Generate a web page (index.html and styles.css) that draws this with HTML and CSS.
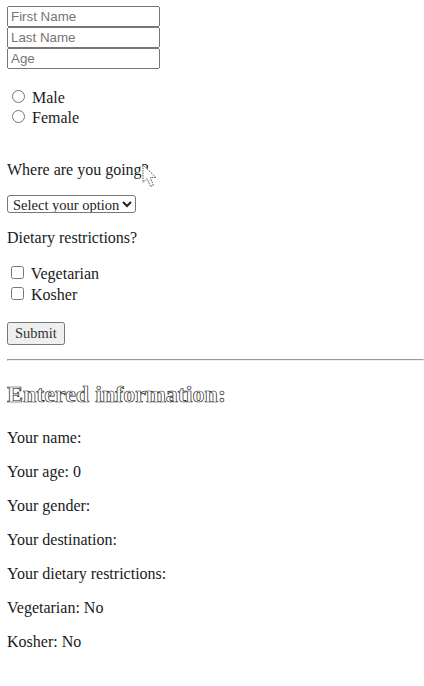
FILE: index.html
```html
<!DOCTYPE html>
<html>
<head>
<meta charset="utf-8">
<link rel="stylesheet" href="styles.css">
</head>
<body>
<form class="form">
  <input class="field" type="text" placeholder="First Name">
  <input class="field" type="text" placeholder="Last Name">
  <input class="field" type="text" placeholder="Age">
  <div class="group group-radio">
    <label class="opt"><input type="radio" name="gender"> Male</label>
    <label class="opt"><input type="radio" name="gender"> Female</label>
  </div>
  <p class="question question-first">Where are you going?</p>
  <select class="select"><option>Select your option</option></select>
  <p class="question question-diet">Dietary restrictions?</p>
  <div class="group group-check">
    <label class="opt opt-check"><input type="checkbox"> Vegetarian</label>
    <label class="opt opt-check"><input type="checkbox"> Kosher</label>
  </div>
  <button class="submit" type="button">Submit</button>
</form>
<hr class="rule">
<h2 class="title">Entered information:</h2>
<p class="line">Your name: </p>
<p class="line">Your age: 0</p>
<p class="line">Your gender: </p>
<p class="line">Your destination: </p>
<p class="line">Your dietary restrictions:</p>
<p class="line">Vegetarian: No</p>
<p class="line">Kosher: No</p>
<svg class="cursor" width="17" height="25" viewBox="0 0 17 25">
  <path d="M1 1 L1 18.5 L5 14.5 L8.5 22.5 L11.5 21.3 L8.2 13.5 L14 13.5 Z" fill="#fff" stroke="#555" stroke-width="1" stroke-dasharray="1.5 1" stroke-linejoin="round"/>
</svg>
</body>
</html>
```
FILE: styles.css
```css
body {
  margin: 6px 0 0 7px;
  font-family: "Liberation Serif", serif;
  font-size: 16px;
  color: #1a1a1a;
}
.form { margin: 0; }
.field {
  display: block;
  width: 153px;
  height: 21px;
  box-sizing: border-box;
  font-family: "Liberation Sans", sans-serif;
  font-size: 13.33px;
}
.group { margin: 18px 0 0 0; }
.group-check { margin-top: 15px; }
.opt { display: block; }
.opt-check { height: 21px; }
.question { margin: 16px 0; }
.question-first { margin-top: 34px; }
.question-diet { margin-top: 15px; }
.select {
  font-family: "Liberation Serif", serif;
  font-size: 14.5px;
  width: 129px;
  height: 18px;
  box-sizing: border-box;
  padding: 0 0 0 1px;
  border: 1px solid #767676;
  border-radius: 3px;
  background: #fff;
  color: #222;
}
.submit {
  margin-top: 17px;
  font-family: "Liberation Serif", serif;
  font-size: 14.5px;
  color: #333;
}
.rule { margin: 14px 0 0 0; }
.title {
  margin: 20px 0 21px;
  font-size: 24px;
  color: #fff;
  -webkit-text-stroke: 0.7px #222;
}
.line { margin: 16px 0; }
.cursor {
  position: absolute;
  left: 142px;
  top: 164px;
}
```
